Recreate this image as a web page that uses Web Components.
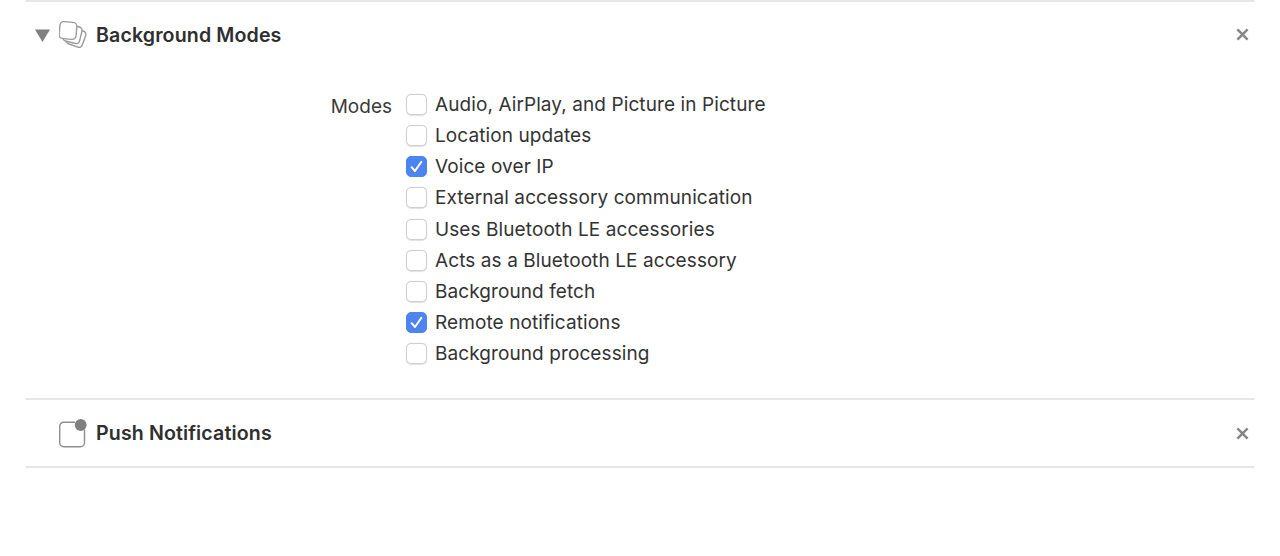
<!DOCTYPE html>
<html><head><meta charset="utf-8"><style>
html,body{margin:0;padding:0;background:#fff}
body{width:1280px;height:556px;overflow:hidden;font-family:Inter,"Liberation Sans",sans-serif;color:#2c2c2c}
</style></head><body>
<template id="t-check"><style>
:host{display:flex;align-items:center;height:31.13px;gap:8px;font-size:19px;color:#333;letter-spacing:.09px}
.b{box-sizing:border-box;width:21px;height:21px;border-radius:5px;border:1px solid #cfcfcf;background:#fff;box-shadow:0 .5px 1px rgba(0,0,0,.12);flex:none;display:flex;align-items:center;justify-content:center}
:host([checked]) .b{background:#4c84f0;border-color:#4c84f0;box-shadow:none}
svg{display:none}
:host([checked]) svg{display:block}
</style><span class="b"><svg width="15" height="15" viewBox="0 0 15 15"><path d="M2.6 8.2 L6 12 L12.4 2.8" fill="none" stroke="#fff" stroke-width="2" stroke-linecap="round" stroke-linejoin="round"/></svg></span><slot></slot></template>

<template id="t-close"><style>
:host{display:block;width:13px;height:13px;margin-top:var(--close-shift,0)}
svg{display:block}
</style><svg width="13" height="13" viewBox="0 0 13 13"><path d="M1.4 1.4 L11.6 11.6 M11.6 1.4 L1.4 11.6" stroke="#858585" stroke-width="2.4"/></svg></template>

<template id="t-head"><style>
:host{display:flex;align-items:center;height:68px;border-top:2px solid #e6e6e6;box-sizing:border-box;padding-right:5.5px}
.tri{width:33px;flex:none;display:flex;padding-left:9px;box-sizing:border-box}
.ico{width:37px;flex:none;display:flex}
.t{flex:1;font-weight:600;font-size:19.6px;letter-spacing:.12px;color:#2f2f2f}
</style><span class="tri"><slot name="tri"></slot></span><span class="ico"><slot name="icon"></slot></span><span class="t"><slot></slot></span><x-close></x-close></template>

<template id="t-modes"><style>
:host{display:grid;grid-template-columns:366px auto;column-gap:14px;padding-top:21px;height:330px;box-sizing:border-box;align-content:start}
.l{font-size:19px;text-align:right;color:#3a3a3a;line-height:31px;padding-top:2px}
</style><div class="l">Modes</div><div><slot></slot></div></template>

<template id="t-app"><style>
:host{display:block;padding:0 26px;box-sizing:border-box;width:1280px}
.end{border-top:2px solid #e6e6e6}
</style><slot></slot><div class="end"></div></template>

<script>
function def(n,id){customElements.define(n,class extends HTMLElement{constructor(){super();this.attachShadow({mode:'open'}).appendChild(document.getElementById(id).content.cloneNode(true));}})}
def('x-close','t-close');def('x-check','t-check');def('x-head','t-head');def('x-modes','t-modes');def('x-app','t-app');
</script>

<x-app>
<x-head style="--close-shift:-2px">
<svg slot="tri" width="15" height="13" viewBox="0 0 15 13"><path d="M0 0.5H15L7.5 13Z" fill="#808080"/></svg>
<svg slot="icon" width="30" height="30" viewBox="0 0 30 30" fill="#fff" stroke="#9a9a9a" stroke-width="1.4"><rect x="8.5" y="9" width="17" height="17" rx="3.5" transform="rotate(20 17 17.5)"/><rect x="5" y="5.5" width="17" height="17" rx="3.5" transform="rotate(14 13.5 14)"/><rect x="0.5" y="2" width="17" height="17" rx="4" transform="rotate(5 9 10.5)"/></svg>
Background Modes
</x-head>
<x-modes>
<x-check>Audio, AirPlay, and Picture in Picture</x-check>
<x-check>Location updates</x-check>
<x-check checked>Voice over IP</x-check>
<x-check>External accessory communication</x-check>
<x-check>Uses Bluetooth LE accessories</x-check>
<x-check>Acts as a Bluetooth LE accessory</x-check>
<x-check>Background fetch</x-check>
<x-check checked>Remote notifications</x-check>
<x-check>Background processing</x-check>
</x-modes>
<x-head>
<svg slot="icon" width="30" height="30" viewBox="0 0 30 30"><path d="M16 4.3H4.7a4 4 0 0 0-4 4V24.7a4 4 0 0 0 4 4H21.5a4 4 0 0 0 4-4V12" fill="#fff" stroke="#8e8e8e" stroke-width="1.4"/><circle cx="21.7" cy="7" r="5.9" fill="#808080"/></svg>
Push Notifications
</x-head>
</x-app>
</body></html>
